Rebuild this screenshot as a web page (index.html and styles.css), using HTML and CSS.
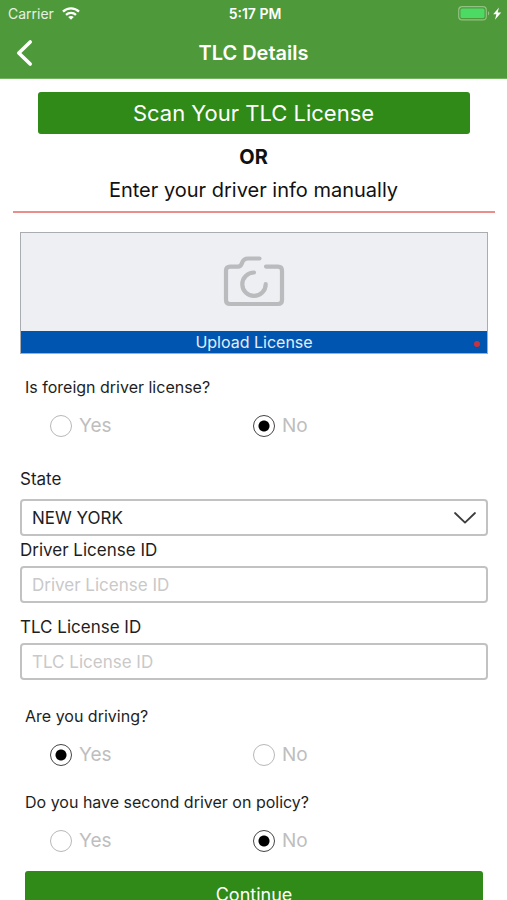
FILE: index.html
```html
<!DOCTYPE html>
<html lang="en">
<head>
<meta charset="utf-8">
<meta name="viewport" content="width=device-width, initial-scale=1">
<title>TLC Details</title>
<link rel="stylesheet" href="styles.css">
</head>
<body>
<header class="header">
  <div class="status">
    <span class="carrier">Carrier
      <svg width="18" height="13" viewBox="0 0 18 13" fill="none" stroke="#fff" stroke-width="2.3" aria-hidden="true">
        <path d="M1 4.6C5.4.2 12.6.2 17 4.6"/>
        <path d="M4 7.8c2.8-2.6 7.2-2.6 10 0"/>
        <path d="M6.200 10.100c1.600-1.500 4-1.500 5.600 0L9 12.800z" fill="#fff" stroke="none"/>
      </svg>
    </span>
    <time class="clock">5:17 PM</time>
    <span class="battery">
      <svg width="44" height="15" viewBox="0 0 44 15" aria-hidden="true">
        <rect x=".7" y=".7" width="27.600" height="13.200" rx="3.500" fill="none" stroke="#93c184" stroke-width="1.200"/>
        <rect x="2.500" y="2.500" width="24" height="9.600" rx="1.600" fill="#4cd964"/>
        <path d="M30 5.200c1.700.7 1.700 3.500 0 4.200z" fill="#93c184"/>
        <path d="M41 1.400 35.200 8.200h3.200L37 13.800 43.200 6.400h-3.600z" fill="#fff"/>
      </svg>
    </span>
  </div>
  <div class="nav">
    <button class="back" type="button" aria-label="Back">
      <svg width="18" height="28" viewBox="0 0 18 28" fill="none" stroke="#fff" stroke-width="3.600" stroke-linecap="round" stroke-linejoin="round" aria-hidden="true"><path d="M15.200 3 3.800 14l11.400 11"/></svg>
    </button>
    <h1 class="title">TLC Details</h1>
  </div>
</header>
<main class="content">
  <button class="primary scan" type="button">Scan Your TLC License</button>
  <p class="or">OR</p>
  <p class="manual">Enter your driver info manually</p>
  <hr class="rule">
  <form class="form">
    <button class="upload" type="button">
      <span class="preview">
        <svg width="62" height="52" viewBox="0 0 62 52" fill="none" stroke="#b9bbbd" stroke-width="4.200" stroke-linecap="round" stroke-linejoin="round" aria-hidden="true">
          <path d="M36.500 2.500H25C21.500 2.500 20 4 19 7c-.8 2.500-1.500 3.600-4 3.600H7Q3 10.600 3 14.600V44Q3 48 7 48H55Q59 48 59 44V14.600Q59 10.600 55 10.600H43"/>
          <path d="M31 16.500a11.700 11.700 0 1 0 11.700 11.700"/>
        </svg>
      </span>
      <span class="caption">Upload License<span class="required"></span></span>
    </button>

    <fieldset class="question">
      <legend>Is foreign driver license?</legend>
      <div class="choices">
        <label><input type="radio" name="foreign">Yes</label>
        <label><input type="radio" name="foreign" checked>No</label>
      </div>
    </fieldset>

    <div class="field state">
      <label for="state">State</label>
      <div class="select">
        <select id="state"><option>NEW YORK</option></select>
        <svg width="24" height="14" viewBox="0 0 24 14" fill="none" stroke="#3c3c3c" stroke-width="1.800" stroke-linecap="round" stroke-linejoin="round" aria-hidden="true"><path d="M2 2l10 9.600L22 2"/></svg>
      </div>
    </div>
    <div class="field driver">
      <label for="driver">Driver License ID</label>
      <input id="driver" type="text" placeholder="Driver License ID">
    </div>
    <div class="field tlc">
      <label for="tlc">TLC License ID</label>
      <input id="tlc" type="text" placeholder="TLC License ID">
    </div>

    <fieldset class="question">
      <legend>Are you driving?</legend>
      <div class="choices">
        <label><input type="radio" name="driving" checked>Yes</label>
        <label><input type="radio" name="driving">No</label>
      </div>
    </fieldset>
    <fieldset class="question">
      <legend>Do you have second driver on policy?</legend>
      <div class="choices">
        <label><input type="radio" name="second">Yes</label>
        <label><input type="radio" name="second" checked>No</label>
      </div>
    </fieldset>
    <button class="primary continue" type="button">Continue</button>
  </form>
</main>
</body>
</html>
```
FILE: styles.css
```css
* { box-sizing: border-box; }

body {
  margin: 0;
  height: 100vh;
  display: flex;
  flex-direction: column;
  background: #fff;
  color: #1e1e1e;
  font-family: Inter, "Liberation Sans", sans-serif;
  font-size: 16px;
  line-height: 20px;
}

button, input, select { font: inherit; color: inherit; }
button { border: 0; padding: 0; cursor: pointer; }

.header {
  flex: none;
  background: #4e993a;
  border-bottom: 1px solid #72b35f;
  color: #fff;
}

.status, .nav {
  display: grid;
  grid-template-columns: 1fr auto 1fr;
  align-items: center;
}

.status {
  height: 27px;
  padding: 0 5px 0 8px;
  font-size: 14px;
}

.carrier { display: flex; align-items: center; gap: 8px; color: #e6f1e3; }
.clock { font-weight: 600; }
.battery { display: flex; justify-content: flex-end; }

.nav { height: 51px; padding: 0 15px; }
.back { justify-self: start; display: flex; background: none; }
.title { margin: 0; font-size: 20px; font-weight: 600; }

.content {
  flex: 1;
  min-height: 0;
  overflow-y: auto;
  scrollbar-width: none;
  padding: 13px 0 20px;
}

.primary {
  display: block;
  border-radius: 3px;
  background: #2f8a17;
  color: #fff;
}

.scan {
  width: calc(100% - 75px);
  height: 42px;
  margin: 0 auto;
  font-size: 22px;
}

.or, .manual {
  margin: 0;
  color: #111;
  font-size: 20px;
  line-height: 24px;
  text-align: center;
}

.or { margin-top: 11px; font-weight: 700; }
.manual { margin-top: 9px; }

.rule {
  height: 2px;
  margin: 9px 12px 0 13px;
  border: 0;
  background: #ea8e89;
}

.form { padding: 19px 19px 0 20px; }

.upload {
  display: block;
  width: 100%;
  border: 1px solid #a9adb1;
  background: #eeeff3;
}

.preview {
  display: flex;
  height: 98px;
  align-items: center;
  justify-content: center;
}

.caption {
  position: relative;
  display: block;
  background: #0055b0;
  color: #e3edf8;
  line-height: 22px;
}

.required {
  position: absolute;
  right: 7px;
  top: 10px;
  width: 6px;
  height: 6px;
  border-radius: 50%;
  background: #c8323c;
}

.question {
  margin: 26px 0 0;
  padding: 0;
  border: 0;
  min-width: 0;
}

.upload + .question { margin-top: 23px; }
.question legend { padding: 0 0 0 5px; }

.choices {
  display: grid;
  grid-template-columns: 1fr 1fr;
  margin: 18px 32px 0 30px;
  color: #bebebe;
  font-size: 19px;
  line-height: 22px;
}

.choices label { display: flex; align-items: center; gap: 7px; }

.choices input {
  appearance: none;
  width: 22px;
  height: 22px;
  margin: 0;
  border: 1px solid #b8b8b8;
  border-radius: 50%;
}

.choices input:checked {
  border-color: #444;
  background: radial-gradient(circle, #000 5px, transparent 6px);
}

.field { display: grid; gap: 6px; font-size: 17px; }
.state { margin-top: 32px; gap: 10px; }
.driver { margin-top: 4px; }
.tlc { margin-top: 14px; }

.field input, .field select {
  width: 100%;
  height: 37px;
  padding: 0 10px;
  border: 2px solid #c2c2c2;
  border-radius: 4px;
  background: #fff;
}

.field input::placeholder { color: #c9c9c9; opacity: 1; }

.select { display: grid; align-items: center; }
.select select, .select svg { grid-area: 1 / 1; }
.select select { appearance: none; }
.select svg { justify-self: end; margin-right: 11px; pointer-events: none; }

.continue {
  width: calc(100% - 10px);
  height: 48px;
  margin: 19px auto 0;
  font-size: 18px;
}
```
